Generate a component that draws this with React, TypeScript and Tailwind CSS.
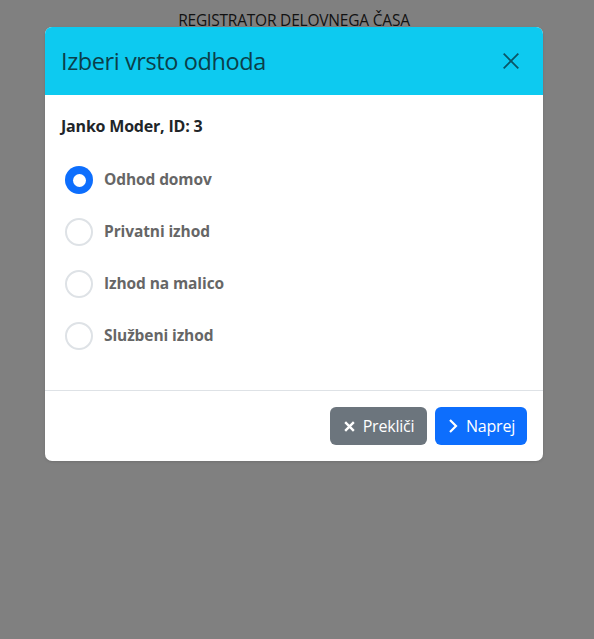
import React from "react";

const options = ["Odhod domov", "Privatni izhod", "Izhod na malico", "Službeni izhod"];

export default function App() {
  return (
    <div
      className="w-[594px] h-[639px] bg-[#808080]"
      style={{ fontFamily: '"Open Sans", "Noto Sans", sans-serif' }}
    >
      <div className="w-[588px] flex flex-col items-center">
        <div className="h-[27px] flex items-end justify-center text-[15.5px] leading-[20px] text-[#111] tracking-[-0.2px]">
          <span className="relative top-[3px]">REGISTRATOR DELOVNEGA ČASA</span>
        </div>
        <div className="w-[498px] bg-white rounded-[7px] overflow-hidden flex flex-col shadow-sm">
          <div className="bg-[#0dcaf0] h-[68px] flex items-center justify-between px-4">
            <span className="text-[23.5px] leading-[36px] text-[#0b3f4a] tracking-[-0.4px]">Izberi vrsto odhoda</span>
            <svg width="18" height="18" viewBox="0 0 16 16" className="mr-[7px]">
              <path d="M1.5 1.5 L14.5 14.5 M14.5 1.5 L1.5 14.5" stroke="#0b5566" strokeWidth="1.6" fill="none" />
            </svg>
          </div>
          <div className="px-4 pt-[19px] pb-[40px]">
            <div className="font-bold text-[16px] leading-[24px] text-[#212529] tracking-[-0.2px]">Janko Moder, ID: 3</div>
            <div className="flex flex-col gap-[24px] mt-[28px] pl-[4px]">
              {options.map((o, i) => (
                <div key={o} className="flex items-center h-[28px] gap-[11px]">
                  {i === 0 ? (
                    <div className="w-[28px] h-[28px] rounded-full bg-[#0d6efd] flex items-center justify-center">
                      <div className="w-[13px] h-[13px] rounded-full bg-white" />
                    </div>
                  ) : (
                    <div className="w-[28px] h-[28px] rounded-full border-2 border-[#dee2e6] bg-white" />
                  )}
                  <span className="font-bold text-[15.5px] text-[#666] tracking-[-0.1px]">{o}</span>
                </div>
              ))}
            </div>
          </div>
          <div className="border-t border-[#dee2e6] flex justify-end gap-2 px-4 pt-4 pb-4">
            <button className="h-[38px] w-[97px] rounded-[6px] bg-[#6c757d] text-white text-[16px] flex items-center justify-center gap-[7px]">
              <svg width="13" height="13" viewBox="0 0 12 12">
                <path d="M2 2 L10 10 M10 2 L2 10" stroke="white" strokeWidth="2.2" fill="none" />
              </svg>
              <span className="tracking-[-0.2px]">Prekliči</span>
            </button>
            <button className="h-[38px] w-[92px] rounded-[6px] bg-[#0d6efd] text-white text-[16px] flex items-center justify-center gap-[7px]">
              <svg width="12" height="16" viewBox="0 0 12 16">
                <path d="M3 2 L9 8 L3 14" stroke="white" strokeWidth="2.2" fill="none" />
              </svg>
              <span className="tracking-[-0.2px]">Naprej</span>
            </button>
          </div>
        </div>
      </div>
    </div>
  );
}
